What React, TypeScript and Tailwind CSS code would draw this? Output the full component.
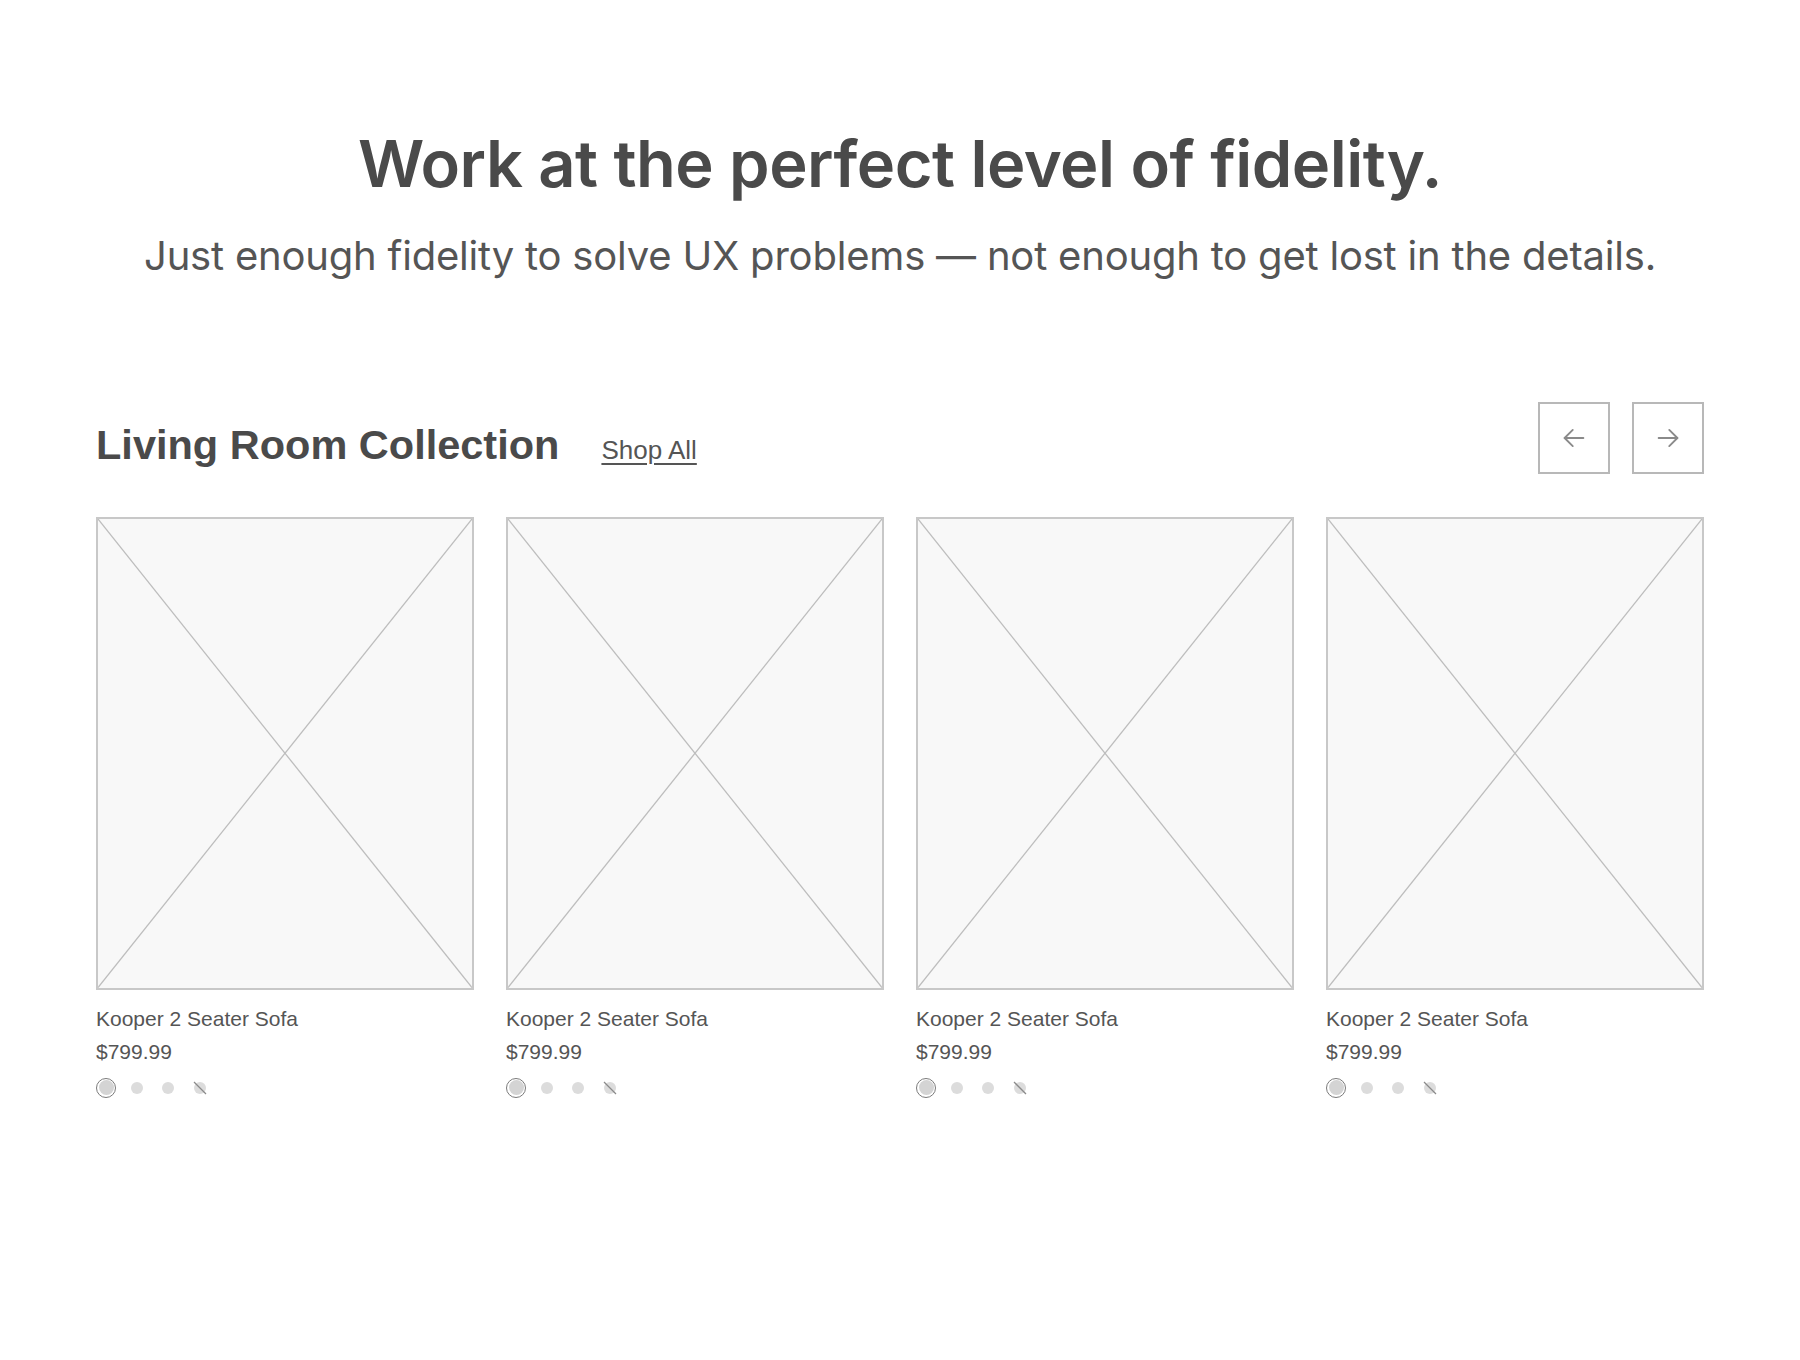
import React from "react";

function Placeholder() {
  return (
    <div className="relative w-full aspect-[4/5] bg-[#f8f8f8] border-2 border-[#c8c8c8]">
      <svg className="absolute inset-0 w-full h-full" viewBox="0 0 100 100" preserveAspectRatio="none">
        <line x1="0" y1="0" x2="100" y2="100" stroke="#bdbdbd" strokeWidth="1.3" vectorEffect="non-scaling-stroke" />
        <line x1="100" y1="0" x2="0" y2="100" stroke="#bdbdbd" strokeWidth="1.3" vectorEffect="non-scaling-stroke" />
      </svg>
    </div>
  );
}

function Swatches() {
  return (
    <div className="flex items-center mt-[10px]">
      <div className="w-[20px] h-[20px] rounded-full border-[1.5px] border-[#7a7a7a] flex items-center justify-center">
        <div className="w-[15px] h-[15px] rounded-full bg-[#d4d4d4]" />
      </div>
      <div className="w-[12px] h-[12px] rounded-full bg-[#dcdcdc] ml-[15px]" />
      <div className="w-[12px] h-[12px] rounded-full bg-[#dcdcdc] ml-[19px]" />
      <div className="relative w-[12px] h-[12px] rounded-full bg-[#dcdcdc] ml-[20px]">
        <svg className="absolute -left-[2px] -top-[2px]" viewBox="0 0 16 16" width="16" height="16">
          <line x1="2" y1="2" x2="14" y2="14" stroke="#8a8a8a" strokeWidth="1.3" />
        </svg>
      </div>
    </div>
  );
}

function Card() {
  return (
    <div className="flex flex-col">
      <Placeholder />
      <div
        className="mt-[12px] text-[21px] leading-[33px] text-[#555555]"
        style={{ fontFamily: '"Liberation Sans", Arial, sans-serif' }}
      >
        Kooper 2 Seater Sofa
      </div>
      <div
        className="text-[21px] leading-[33px] text-[#555555]"
        style={{ fontFamily: '"Liberation Sans", Arial, sans-serif' }}
      >
        $799.99
      </div>
      <Swatches />
    </div>
  );
}

function ArrowButton({ dir }: { dir: "left" | "right" }) {
  return (
    <button className="w-[72px] h-[72px] border-2 border-[#b8b8b8] bg-white flex items-center justify-center">
      <svg width="30" height="30" viewBox="0 0 24 24" fill="none" stroke="#8a8a8a" strokeWidth="1.5" strokeLinecap="round" strokeLinejoin="round">
        {dir === "left" ? (
          <>
            <path d="M19.5 12H4.5" />
            <path d="M11 5.5L4.5 12 11 18.5" />
          </>
        ) : (
          <>
            <path d="M4.5 12h15" />
            <path d="M13 5.5l6.5 6.5-6.5 6.5" />
          </>
        )}
      </svg>
    </button>
  );
}

export default function App() {
  return (
    <div className="w-[1800px] h-[1360px] bg-white" style={{ fontFamily: 'Inter, "Noto Sans", sans-serif' }}>
      <div className="pt-[124px] flex flex-col items-center">
        <h1 className="text-[65px] leading-[80px] font-semibold text-[#4a4a4a] tracking-[-0.5px]">
          Work at the perfect level of fidelity.
        </h1>
        <p className="mt-[27px] text-[40px] leading-[50px] text-[#555555] tracking-[-0.2px]">
          Just enough fidelity to solve UX problems — not enough to get lost in the details.
        </p>
      </div>
      <div className="w-[1608px] mx-auto mt-[121px]">
        <div className="flex items-center justify-between">
          <div className="flex items-baseline gap-[42px] pt-[14px]" style={{ fontFamily: '"Liberation Sans", Arial, sans-serif' }}>
            <h2 className="text-[41.5px] font-bold text-[#4a4a4a] leading-[48px]">Living Room Collection</h2>
            <a className="text-[26px] text-[#555555] underline underline-offset-[4px] decoration-[2px]">Shop All</a>
          </div>
          <div className="flex gap-[22px]">
            <ArrowButton dir="left" />
            <ArrowButton dir="right" />
          </div>
        </div>
        <div className="grid grid-cols-4 gap-[32px] mt-[43px]">
          <Card />
          <Card />
          <Card />
          <Card />
        </div>
      </div>
    </div>
  );
}
